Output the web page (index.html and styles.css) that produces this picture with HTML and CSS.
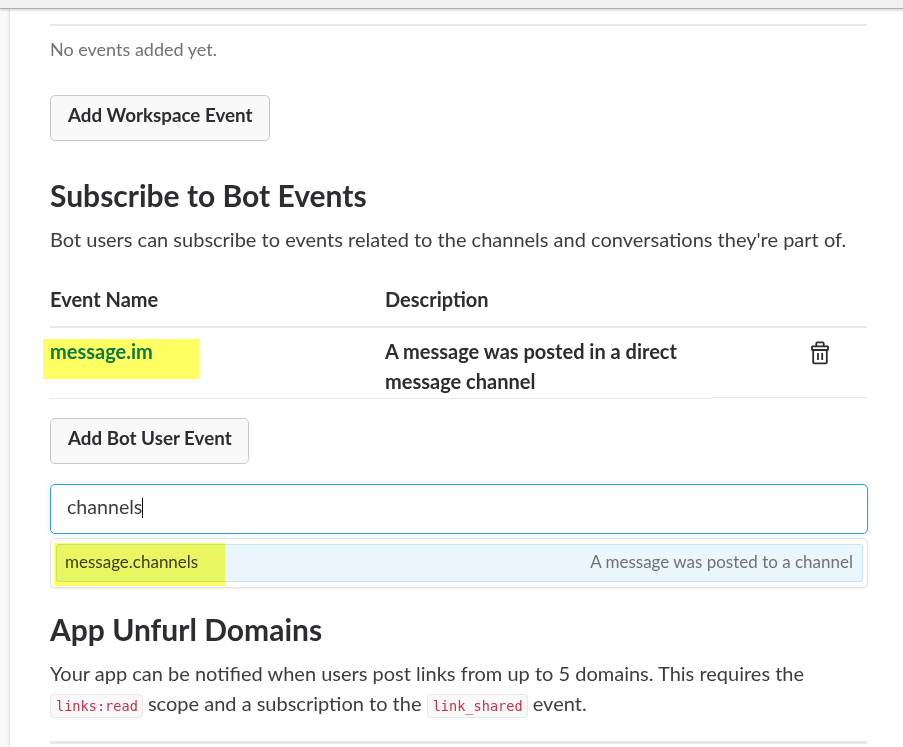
FILE: index.html
```html
<!DOCTYPE html>
<html lang="en">
<head>
<meta charset="utf-8">
<title>Event Subscriptions</title>
<link rel="stylesheet" href="styles.css">
</head>
<body>
<header class="topbar"></header>
<main class="card">
  <p class="empty">No events added yet.</p>
  <button class="btn btn-workspace">Add Workspace Event</button>
  <section class="bot">
    <h2>Subscribe to Bot Events</h2>
    <p class="lead">Bot users can subscribe to events related to the channels and conversations they're part of.</p>
    <div class="row head"><span>Event Name</span><span>Description</span></div>
    <div class="row item">
      <div class="cell name"><a class="mark">message.im</a></div>
      <div class="cell desc">A message was posted in a direct message channel</div>
      <div class="cell action">
        <svg class="trash" viewBox="0 0 18 24" width="18" height="24" fill="none" stroke="#2c2d30" stroke-width="1.8" stroke-linejoin="round">
          <path d="M5.3 5V2.6Q5.3 1.4 6.5 1.4H11.5Q12.7 1.4 12.7 2.6V5"/>
          <rect x="1" y="5.3" width="16" height="3.7" rx=".4"/>
          <path d="M2.2 9V21.6Q2.2 22.4 3 22.4H15Q15.8 22.4 15.8 21.6V9"/>
          <path d="M7 12V19M11.2 12V19"/>
        </svg>
      </div>
    </div>
    <button class="btn btn-bot">Add Bot User Event</button>
    <div class="search"><span>channels</span><i class="caret"></i></div>
    <div class="menu">
      <div class="option"><span class="option-name">message.channels</span><span class="option-desc">A message was posted to a channel</span></div>
    </div>
  </section>
  <section class="unfurl">
    <h2>App Unfurl Domains</h2>
    <p>Your app can be notified when users post links from up to 5 domains. This requires the <code>links:read</code> scope and a subscription to the <code>link_shared</code> event.</p>
  </section>
</main>
</body>
</html>
```
FILE: styles.css
```css
* { box-sizing: border-box; }
body {
  margin: 0;
  height: 747px;
  overflow: hidden;
  background: #f9f9f9;
  color: #3d3c40;
  font: 20px/30px Lato, sans-serif;
}
.topbar {
  position: relative;
  height: 9px;
  background: #f1f1f1;
  border-bottom: 1px solid #b0b0b0;
  box-shadow: 0 1px 3px rgba(0,0,0,.2);
}
.card {
  height: 738px;
  margin-left: 9px;
  padding: 15px 36px 0 40px;
  background: #fff;
  border-left: 1px solid #e4e4e4;
  box-shadow: -1px 0 2px rgba(0,0,0,.05);
}
h2, p { margin: 0; }
h2 {
  color: #2c2d30;
  font-size: 30px;
  line-height: 36px;
  font-weight: 700;
}
.empty {
  width: 817px;
  height: 71px;
  padding-top: 8px;
  border-top: 2px solid #e8e8e8;
  color: #717274;
  font-size: 18px;
}
.btn {
  display: block;
  height: 46px;
  padding: 0 17px 7px;
  background: #f9f9f9;
  border: 1px solid #c7cacd;
  border-radius: 5px;
  color: #2c2d30;
  font: 700 18.8px/30px Lato, sans-serif;
  white-space: nowrap;
}
.btn-workspace { width: 220px; }
.btn-bot { width: 199px; margin-top: 19px; }
.bot { width: 818px; padding-top: 36px; }
.lead { margin-top: 11px; white-space: nowrap; }
.row {
  display: grid;
  grid-template-columns: 335px 326px 1fr;
  width: 817px;
  color: #2c2d30;
  font-weight: 700;
}
.head {
  height: 44px;
  margin-top: 30px;
  border-bottom: 2px solid #e8e8e8;
}
.item { height: 71px; }
.cell { padding-top: 8px; border-bottom: 1px solid #e8e8e8; }
.action { height: 70px; padding: 13px 0 0 100px; }
.mark {
  display: block;
  width: 156px;
  height: 40px;
  margin: 3px 0 0 -7px;
  padding: 0 0 0 7px;
  background: #ffff63;
  color: #0b7a45;
  line-height: 24px;
}
.trash { display: block; }
.search {
  display: flex;
  height: 50px;
  margin-top: 20px;
  padding: 7px 16px;
  border: 1px solid #2d9ee0;
  border-radius: 5px;
  box-shadow: 0 0 6px rgba(45,158,224,.18);
  font-size: 19.6px;
}
.caret { width: 1px; height: 20px; margin-top: 6px; background: #000; }
.menu {
  position: relative;
  height: 50px;
  margin-top: 4px;
  padding: 5px 4px;
  background: #fff;
  border: 1px solid #e3e4e6;
  border-radius: 5px;
  box-shadow: 0 1px 2px rgba(0,0,0,.08);
}
.menu::after {
  content: "";
  position: absolute;
  left: 3px;
  top: 4px;
  width: 171px;
  height: 43px;
  background: #ffff63;
  mix-blend-mode: multiply;
}
.option {
  display: flex;
  justify-content: space-between;
  height: 38px;
  margin-left: 1px;
  padding: 2px 9px 2px 8px;
  background: #eaf5fc;
  border: 1px solid #c5e4f4;
  border-radius: 3px;
  font-size: 17px;
}
.option-desc { color: #717274; }
.unfurl { width: 817px; height: 156px; padding-top: 23px; border-bottom: 3px solid #e8e8e8; }
.unfurl p { margin-top: 11px; }
code {
  padding: 3px 4px 3px 5px;
  background: #f9f9f9;
  border: 1px solid #e8e8e8;
  border-radius: 4px;
  color: #cc2f48;
  font: 13.6px/20px "DejaVu Sans Mono", monospace;
}
```
